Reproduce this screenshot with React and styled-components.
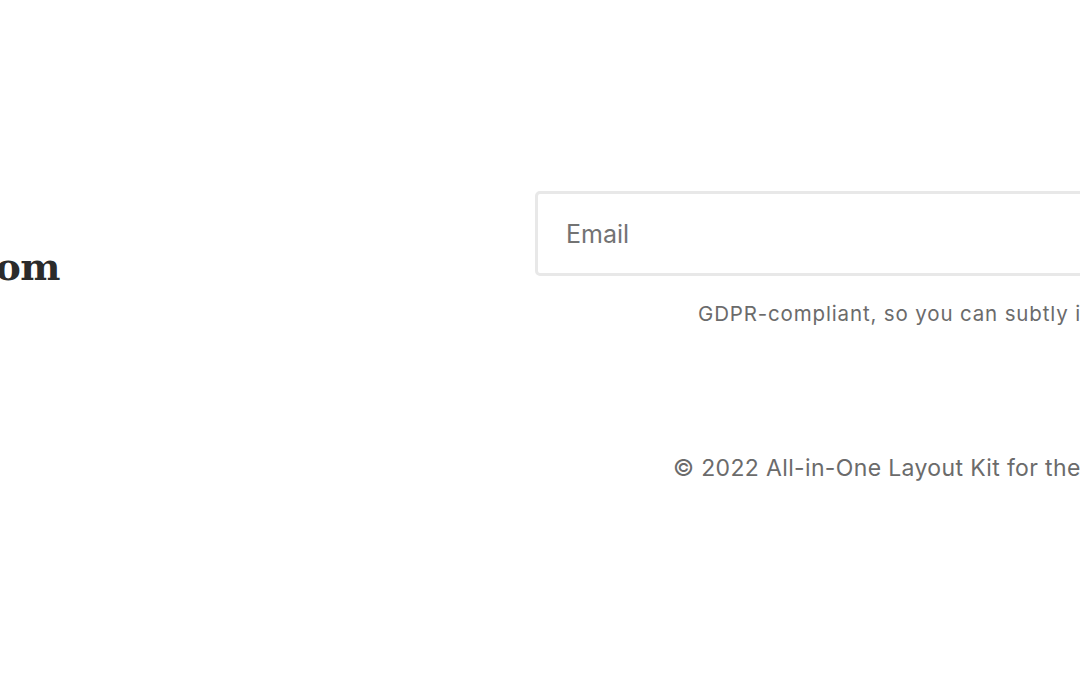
import React from 'react'
import styled, { createGlobalStyle } from 'styled-components'

const GlobalStyle = createGlobalStyle`
  html, body {
    margin: 0;
    padding: 0;
    background: #ffffff;
    overflow: hidden;
  }
  body {
    font-family: Inter, "Liberation Sans", sans-serif;
    color: #6b6b6b;
  }
`

const Page = styled.div`
  width: 1080px;
  height: 675px;
  overflow: hidden;
  display: flex;
  flex-direction: column;
`

const Subscribe = styled.section`
  display: flex;
  align-items: flex-start;
  padding-top: 191px;
`

const HeadingCol = styled.div`
  width: 60px;
  flex-shrink: 0;
  display: flex;
  justify-content: flex-end;
  padding-top: 52px;
`

const Heading = styled.h2`
  margin: 0;
  white-space: nowrap;
  font-family: "DejaVu Serif", "Liberation Serif", serif;
  font-weight: 700;
  font-size: 38px;
  line-height: 48px;
  color: #2b2b2b;
  letter-spacing: -0.5px;
`

const FormCol = styled.form`
  margin-left: 475px;
  width: 720px;
  flex-shrink: 0;
  display: flex;
  flex-direction: column;
`

const EmailInput = styled.input`
  box-sizing: border-box;
  width: 100%;
  height: 85px;
  border: 3px solid #e8e8e8;
  border-radius: 5px;
  padding: 0 28px;
  font-family: Inter, "Liberation Sans", sans-serif;
  font-size: 25px;
  color: #333;
  outline: none;
  background: #fff;

  &::placeholder {
    color: #737373;
  }
`

const Note = styled.p`
  margin: 24px 0 0;
  padding-left: 163px;
  white-space: nowrap;
  font-size: 20.5px;
  letter-spacing: 0.85px;
  line-height: 28px;
  color: #6b6b6b;
`

const Footer = styled.footer`
  padding: 125px 0 0 673px;
`

const Copy = styled.p`
  margin: 0;
  white-space: nowrap;
  font-size: 23px;
  letter-spacing: 0.35px;
  line-height: 30px;
  color: #6b6b6b;
`

const App = () => {
  return (
    <Page>
      <GlobalStyle />
      <Subscribe>
        <HeadingCol>
          <Heading>Subscribe at example.com</Heading>
        </HeadingCol>
        <FormCol onSubmit={(e) => e.preventDefault()}>
          <EmailInput type="email" name="email" placeholder="Email" />
          <Note>GDPR-compliant, so you can subtly inform your customers</Note>
        </FormCol>
      </Subscribe>
      <Footer>
        <Copy>© 2022 All-in-One Layout Kit for the Figma community</Copy>
      </Footer>
    </Page>
  )
}

export default App
